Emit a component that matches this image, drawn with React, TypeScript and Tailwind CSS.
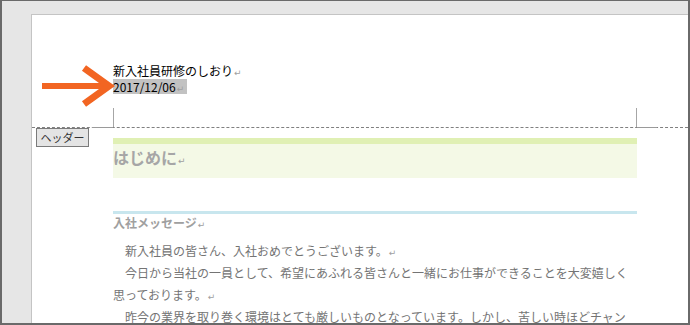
import React from "react";

const Ret = () => (
  <span className="font-['DejaVu_Sans',sans-serif] text-[9px] leading-none font-normal text-[#a0a0a0] ml-px">
    ↵
  </span>
);

const Arrow = () => (
  <svg width="80" height="44" viewBox="0 0 80 44" className="absolute left-[6px] top-[49px]">
    <line x1="4" y1="22" x2="66" y2="22" stroke="#f26522" strokeWidth="6" />
    <polyline
      points="46,4 71,22 46,40"
      fill="none"
      stroke="#f26522"
      strokeWidth="7"
      strokeLinejoin="miter"
    />
  </svg>
);

const bodyLines = [
  { text: "　新入社員の皆さん、入社おめでとうございます。", ret: true },
  { text: "　今日から当社の一員として、希望にあふれる皆さんと一緒にお仕事ができることを大変嬉しく", ret: false },
  { text: "思っております。", ret: true },
  { text: "　昨今の業界を取り巻く環境はとても厳しいものとなっています。しかし、苦しい時ほどチャン", ret: false },
];

export default function App() {
  return (
    <div className="w-[690px] h-[325px] overflow-hidden bg-[#e6e6e6] border-t border-b-2 border-l-2 border-r-2 border-[#6a6a6a] flex flex-col pt-[13px] pl-[29px] font-['Noto_Sans_CJK_JP',sans-serif]">
      <div className="flex-1 relative overflow-hidden bg-white border-t border-l border-[#c4c4c4]">
        <Arrow />

        {/* Header label */}
        <div className="absolute left-[4px] top-[113px] w-[53px] h-[19px] flex items-center justify-center bg-[#e4e4e4] border border-[#7a7a7a] text-[11px] leading-none text-[#333]">
          ヘッダー
        </div>

        <div className="pt-[48px]">
          {/* Header content */}
          <div className="pl-[81px] h-[16px] text-[12px] leading-[16px] text-black">
            新入社員研修のしおり
            <Ret />
          </div>
          <div className="pl-[81px] h-[16px] text-[12px] leading-[16px] text-black">
            <span className="inline-block h-[15px] bg-[#c2c2c2] pr-[3px]">
              2017/12/06
              <Ret />
            </span>
          </div>

          {/* Corner marks + header boundary */}
          <div className="mt-[13px] h-[20px] flex items-end border-b border-dashed border-[#808080]">
            <div className="w-[60px]" />
            <div className="w-[21px] h-px -mb-px bg-[#9a9a9a]" />
            <div className="w-[524px] h-full border-l border-r border-[#a6a6a6]" />
            <div className="w-[20px] h-px -mb-px bg-[#9a9a9a]" />
          </div>

          {/* Body */}
          <div className="pl-[81px] w-[605px]">
            <div className="mt-[10px] h-[6px] bg-[#e0f0b4]" />
            <div className="h-[34px] bg-[#f4f9e6] pt-[4px] text-[16px] leading-[18px] font-bold text-[#a6a6a6]">
              はじめに
              <Ret />
            </div>

            <div className="mt-[33px] h-[3px] bg-[#c8e6ee]" />
            <div className="mt-px h-[16px] text-[12px] leading-[16px] font-bold text-[#a0a0a0]">
              入社メッセージ
              <Ret />
            </div>

            <div className="mt-[9px] text-[12px] leading-[22px] text-[#747474]">
              {bodyLines.map((l, i) => (
                <div key={i} className="h-[22px] whitespace-nowrap">
                  {l.text}
                  {l.ret && <Ret />}
                </div>
              ))}
            </div>
          </div>
        </div>
      </div>
    </div>
  );
}
